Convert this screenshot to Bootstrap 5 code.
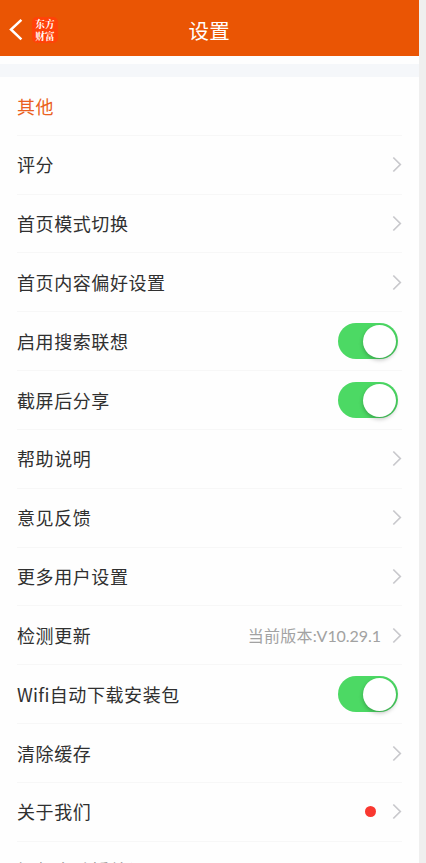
<!DOCTYPE html>
<html lang="zh-CN">
<head>
<meta charset="utf-8">
<meta name="viewport" content="width=device-width, initial-scale=1">
<title>设置</title>
<link href="https://cdn.jsdelivr.net/npm/bootstrap@5.3.0/dist/css/bootstrap.min.css" rel="stylesheet">
<style>
body{background:#efefef;font-family:"Noto Sans CJK SC",sans-serif;height:863px}
.screen{width:419px;height:863px;background:#fefefe;color:#303030}
.topbar{height:55.5px;background:#ea5504;padding:4px 0 0 8px;flex:none}
.topbar h1{font-size:20.5px;line-height:30px;letter-spacing:.3px;left:188.5px;top:14.5px}
.back{width:15px;height:23px}
.brand{width:26px;height:26px;margin-left:9px;border-radius:5px;background:#ff4208;font:700 9.7px/12px "Noto Serif CJK SC","Noto Sans CJK SC",serif;padding-top:1px}
.gap-strip{height:13px;margin-top:8.5px;background:#f5f7fa;flex:none}
.settings{padding-left:17px;padding-right:17px}
.item{height:58.82px;border-bottom:1px solid #f7f7f7;padding-top:.4px;font-size:18px;letter-spacing:.58px;line-height:27px;flex:none}
.item:last-child{padding-top:1px;color:#777}
.item.heading{color:#ea6020;padding-top:1px}
.chev{width:10px;height:17px}
.version{font-size:16px;letter-spacing:.2px;color:#a2a2a2;margin-right:11px}
.version span{font-family:Lato,sans-serif;font-size:16px;letter-spacing:-.05px}
.latin{letter-spacing:.3px}
.toggle{width:60px;height:36px;border-radius:18px;background:#4cd964;padding:1.5px 2px;margin-right:4px}
.knob{width:33px;height:33px;border-radius:50%;background:#fff;box-shadow:0 2px 4px rgba(0,0,0,.25)}
.dot{width:11px;height:11px;background:#f93830;margin-right:16.5px}
</style>
</head>
<body class="overflow-hidden">
<svg class="d-none"><symbol id="c" viewBox="0 0 10 17"><path d="M1.3 1.5L8.3 8.5L1.3 15.5" fill="none" stroke="#c8c8cc" stroke-width="1.7"/></symbol></svg>
<main class="screen d-flex flex-column overflow-hidden">
<header class="topbar d-flex align-items-center text-white position-relative">
<svg class="back" viewBox="0 0 15 23"><path d="M13.4 1.8L3 11.5L13.4 21.4" fill="none" stroke="#fff" stroke-width="2.5"/></svg>
<div class="brand text-center">东方<br>财富</div>
<h1 class="position-absolute m-0 fw-normal">设置</h1>
</header>
<div class="gap-strip"></div>
<section class="settings">
<div class="item heading d-flex align-items-center">其他</div>
<div class="item d-flex align-items-center justify-content-between">评分<svg class="chev"><use href="#c"/></svg></div>
<div class="item d-flex align-items-center justify-content-between">首页模式切换<svg class="chev"><use href="#c"/></svg></div>
<div class="item d-flex align-items-center justify-content-between">首页内容偏好设置<svg class="chev"><use href="#c"/></svg></div>
<div class="item d-flex align-items-center justify-content-between">启用搜索联想<div class="toggle d-flex justify-content-end"><div class="knob"></div></div></div>
<div class="item d-flex align-items-center justify-content-between">截屏后分享<div class="toggle d-flex justify-content-end"><div class="knob"></div></div></div>
<div class="item d-flex align-items-center justify-content-between">帮助说明<svg class="chev"><use href="#c"/></svg></div>
<div class="item d-flex align-items-center justify-content-between">意见反馈<svg class="chev"><use href="#c"/></svg></div>
<div class="item d-flex align-items-center justify-content-between">更多用户设置<svg class="chev"><use href="#c"/></svg></div>
<div class="item d-flex align-items-center">检测更新<div class="version ms-auto">当前版本<span>:V10.29.1</span></div><svg class="chev"><use href="#c"/></svg></div>
<div class="item d-flex align-items-center justify-content-between"><span><span class="latin">Wifi</span>自动下载安装包</span><div class="toggle d-flex justify-content-end"><div class="knob"></div></div></div>
<div class="item d-flex align-items-center justify-content-between">清除缓存<svg class="chev"><use href="#c"/></svg></div>
<div class="item d-flex align-items-center">关于我们<div class="dot rounded-circle ms-auto"></div><svg class="chev"><use href="#c"/></svg></div>
<div class="item d-flex align-items-center">视频自动播放设置</div>
</section>
</main>
<script src="https://cdn.jsdelivr.net/npm/bootstrap@5.3.0/dist/js/bootstrap.bundle.min.js"></script>
</body>
</html>
